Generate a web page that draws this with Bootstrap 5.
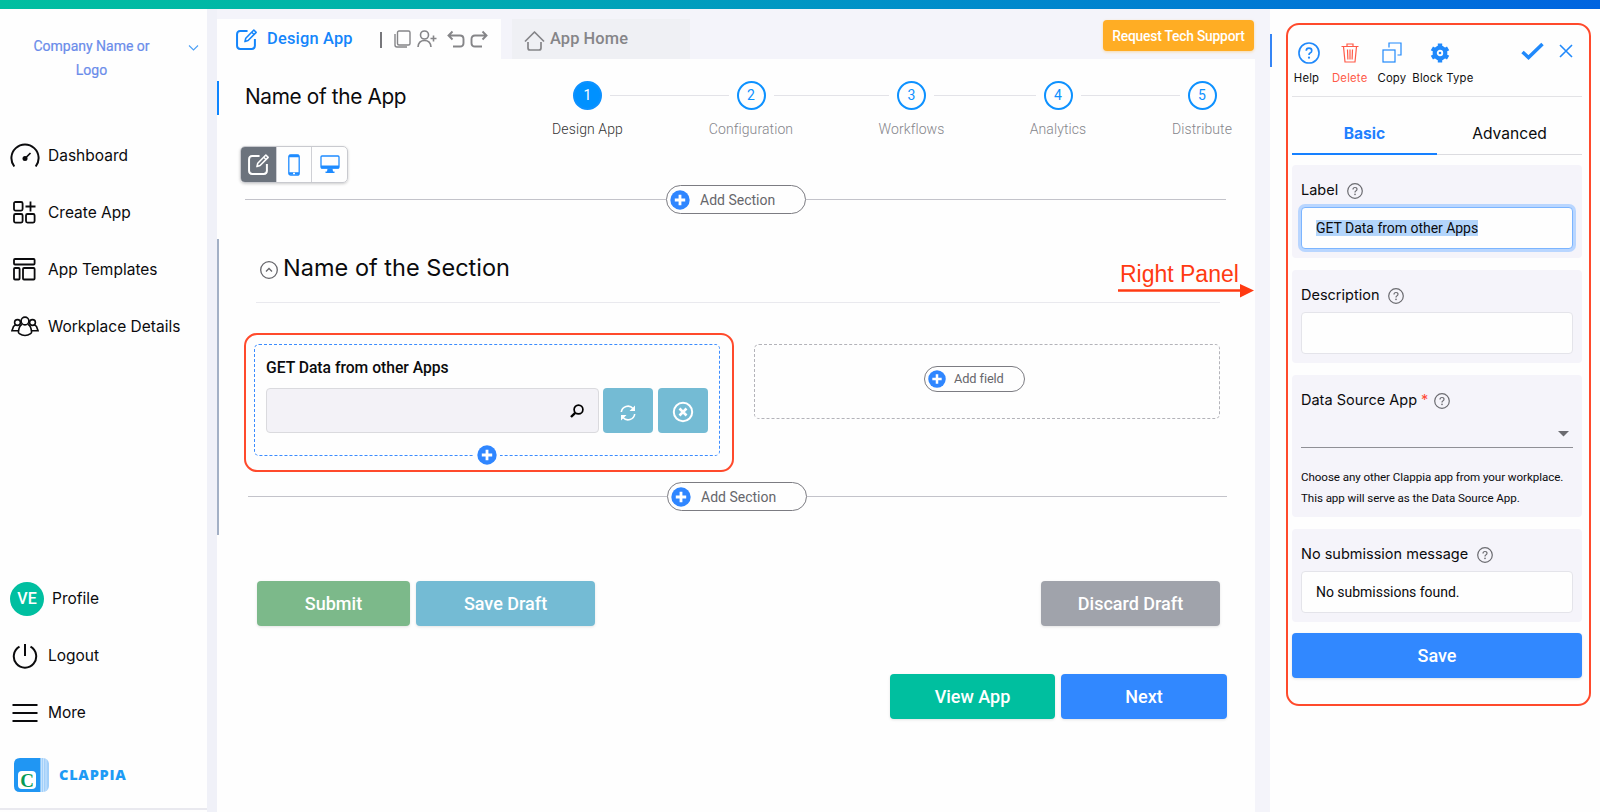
<!DOCTYPE html>
<html lang="en">
<head>
<meta charset="utf-8">
<meta name="viewport" content="width=device-width, initial-scale=1">
<title>Clappia - Design App</title>
<link href="https://cdn.jsdelivr.net/npm/bootstrap@5.3.0/dist/css/bootstrap.min.css" rel="stylesheet">
<style>
body{font-family:Roboto,"Liberation Sans",sans-serif;color:#0b0b0d;background:#f4f4fa;height:812px;overflow:hidden;line-height:20px}
svg{display:block;flex:none;fill:none;stroke:currentColor}
.topbar{height:9px;background:linear-gradient(90deg,#00bfa0 0%,#00b5a8 20%,#0091c8 55%,#0078d4 80%,#0064e0 100%)}
.shell{height:803px}
.side{width:207px;background:#fefefe}
.gutter{width:10px;background:#f0f1f8}
.company{height:118px;padding-top:26px;font-size:14px;line-height:23.5px;color:#6a8cea;-webkit-text-stroke:.2px #6a8cea}
.company .label{width:183px}
.company svg{position:absolute;left:188px;top:35px;color:#4da0f5}
.side-item{height:57px;font-family:Inter,Roboto,sans-serif;font-size:15.5px}
.side-item .ico{width:48px;display:flex;justify-content:center;padding-left:1px}
.avatar{width:34px;height:34px;margin-left:10px;margin-right:8px;background:#00bfa0;color:#fff;font-family:Roboto,sans-serif;font-size:16px;font-weight:500}
.brand-row{height:67px;padding-left:14px}
.brand-row svg{stroke:none}
.brand{font:800 14.5px/20px "Open Sans",sans-serif;color:#1d9bf5;letter-spacing:.75px;margin-left:10px}
.side-end{height:4px;border-top:2px solid #e9e9ef}
.stage{width:1038px}
.tabs-row{height:50px;padding-top:10px}
.tab-on{width:284px;background:#fefefe;padding-left:19px;color:#858588}
.tab-on .name{color:#1485fb;font-size:16.4px;font-weight:500;letter-spacing:.2px;width:86px;margin-left:10px;margin-right:27px;white-space:nowrap}
.vbar{width:2px;height:16px;background:#77777b;margin-top:2px}
.tab-off{width:178px;margin-left:11px;padding-left:12px;background:#eff0f4;color:#858588;font-size:16.4px;font-weight:500;letter-spacing:.1px}
.support{width:151px;height:31px;margin:1px 1px 0 0;background:#ffad24;color:#fff;border-radius:4px;font-size:13.8px;font-weight:500;letter-spacing:-.2px;box-shadow:0 1px 3px #ffad2460}
.canvas{background:#fefefe;height:753px}
.title-row{height:75px;padding-top:22px}
.title-row .bar{width:2px;height:34px;background:#0d85ff}
.title-row .name{width:328px;margin-left:26px;font-family:Inter,Roboto,sans-serif;font-size:20.800px;letter-spacing:-.35px;line-height:31px}
.steps{display:grid;grid-template-columns:29px 134.5px 29px 131.5px 29px 117.5px 29px 115px 29px}
.step{display:flex;flex-direction:column;align-items:center;white-space:nowrap;font-size:14px;font-weight:300;color:#85858b;letter-spacing:.1px}
.step b{width:29px;height:29px;border:2px solid #0d91ff;border-radius:50%;color:#0d91ff;font-weight:400;line-height:25px;text-align:center;font-size:14px;margin-bottom:9px;margin-top:-.5px;letter-spacing:0}
.step.on b{background:#0091ff;color:#fff}.step.on{color:#333}
.link-line{height:1px;background:#e3e3e8;margin:14px 8px 0}
.devices{width:108px;height:37px;margin:12px 0 0 23px;border:1px solid #c9cacf;border-radius:5px;box-shadow:0 1px 3px #0003;overflow:hidden;color:#1e8bff}
.devices div{flex:1;display:flex;align-items:center;justify-content:center;border-left:1px solid #cfd0d5}
.devices div:first-child{background:#6c737d;color:#fff;border:0}
.adder{height:29px;color:#66666b;font-size:14px}
.adder i{height:1px;background:#c3c3ca;flex:none}
.pill{width:140px;height:29px;border:1px solid #7c7c82;border-radius:15px;padding-left:3px}
.pill-sm{width:101px;height:26px;padding-left:3px;font-size:12.8px;letter-spacing:-.1px}
.pill span{margin-left:10px}
.pill-sm span{margin-left:8px}
.section{height:296px;border-left:2px solid #a3b0c5;margin-top:25px}
.section-head{height:64px;margin:0 35px 0 37px;padding:0 0 6px 4px;border-bottom:1px solid #e9e9ee;font-family:Inter,Roboto,sans-serif;font-size:23.500px;letter-spacing:.02px}
.section-head svg{color:#66666b;margin-top:4px}
.section-head span{margin-left:5px}
.fields{margin:41px 35px 0 35px;height:112px}
.picked{width:466px;height:112px;border:1.5px dashed #3b8cff;border-radius:5px;padding:13px 11px 0 11px}
.picked h6{font-size:15.7px;font-weight:500;line-height:20px;margin:0 0 10px;letter-spacing:-.02px}
.lookup{width:333px;height:45px;background:#f3f2f7;border:1px solid #dadade;border-radius:4px;padding-right:14px}
.sq{width:50px;height:45px;background:#74bbd4;color:#fff;border-radius:4px}
.plus-mid{left:219px;top:98px;width:26px;height:20px;background:#fefefe}
.slot{width:466px;height:75px;border:1.5px dashed #b3b3b9;border-radius:5px;padding:21px 0 0 169px}
.act{height:45px;border-radius:4px;color:#fff;font-size:18px;font-weight:500;display:flex;align-items:center;justify-content:center;box-shadow:0 1px 3px #0000001c}
.divide{width:15px}
.panel{width:330px;background:#fefefe}
.panel-bar{left:0;top:25px;width:2px;height:33px;background:#3585f5}
.outline-red{border:2px solid #ff4a2c;border-radius:13px}
.panel-box{width:305px;height:683px;margin:14px 0 0 16px;padding:0 7px 0 4px}
.tools{height:72px;border-bottom:1px solid #e3e3e6;padding-top:16px;font-family:Inter,Roboto,sans-serif;font-size:11.3px;line-height:14px;letter-spacing:.2px;color:#111}
.tools .tool{display:flex;flex-direction:column;align-items:center;white-space:nowrap}
.tools .pic{height:23px;display:flex;align-items:center;margin-bottom:7px;color:#2089fb}
.ptabs{height:58px;font-family:Inter,Roboto,sans-serif;font-size:15.600px;width:291px}
.ptabs div{width:145px;display:flex;align-items:end;justify-content:center;padding-bottom:10px;border-bottom:1px solid #dcdce0}
.ptabs div:first-child{border-bottom:2px solid #1680ff;color:#1f80ff;font-weight:700;padding-bottom:9px}
.block{background:#f5f4fa;border-radius:4px;padding:15px 9px 0 9px;height:93px}
.block .cap{font-family:Inter,Roboto,sans-serif;font-size:14.5px;line-height:19.500px;height:27px;display:flex;white-space:nowrap}
.block .cap svg{margin:3px 0 0 9px;color:#6b6b70}
.box{height:42px;background:#fefefe;border:1px solid #e4e4ea;border-radius:4px;font-size:14px;line-height:40px;padding-left:14px;letter-spacing:-.03px}
.box.focus{border-color:#7cb5ff;box-shadow:0 0 0 3px #b9d6ff}
.box em{font-style:normal;background:#b3d5fb}
.pick{height:28px;border-bottom:1px solid #8f8f95;padding-right:4px}
.hint{font-size:11.600px;line-height:21px;letter-spacing:-.07px;margin-top:19px;white-space:nowrap}
.note{left:1118px;top:261px;color:#ff3a12;font:23px/26px "Liberation Sans",sans-serif}
</style>
</head>
<body>
<svg width="0" height="0" class="position-absolute">
  <symbol id="plus" viewBox="0 0 20 20"><circle cx="10" cy="10" r="9.7" fill="#2f86ff" stroke="none"/><path d="M10 4.8v10.4M4.8 10h10.4" stroke="#fff" stroke-width="2.8"/></symbol>
  <symbol id="edit" viewBox="0 0 20 20"><path d="M11 2H4Q1 2 1 5v11q0 3 3 3h11q3 0 3-3V9.500" stroke-width="1.9"/><path d="M8.500 12l.8-3.200L17 1l2.200 2.200-7.700 7.800z" stroke-width="1.500" stroke-linejoin="round"/><path d="M15 3l2.200 2.200" stroke-width="1.300"/></symbol>
  <symbol id="ask" viewBox="0 0 16 16"><circle cx="8" cy="8" r="7.300" stroke-width="1.200"/><path d="M6 6.400Q6 4.500 8 4.500t2 1.800Q10 7.500 8.800 8 8 8.400 8 9.500" stroke-width="1.200"/><circle cx="8" cy="11.400" r=".8" fill="currentColor" stroke="none"/></symbol>
</svg>
<div class="topbar"></div>
<div class="shell d-flex position-relative">
  <aside class="side d-flex flex-column">
    <div class="company position-relative text-center"><div class="label">Company Name or<br>Logo</div>
      <svg width="11" height="8" viewBox="0 0 11 8"><path d="M1 1.500l4.500 4.500L10 1.500" stroke-width="1.100"/></svg></div>
    <div class="side-item d-flex align-items-center"><div class="ico"><svg width="30" height="25" viewBox="0 0 30 25"><path d="M4.300 23.500A13.600 13.600 0 1 1 25.700 23.500" stroke-width="2"/><circle cx="15" cy="15.500" r="2.500" fill="currentColor" stroke="none"/><path d="M15 15.500l5.500-5.500" stroke-width="1.700"/></svg></div>Dashboard</div>
    <div class="side-item d-flex align-items-center"><div class="ico"><svg width="23" height="24" viewBox="0 0 23 24" stroke-width="1.800"><rect x="1" y="1" width="8.600" height="8.600" rx="1.500"/><rect x="1" y="13" width="8.600" height="8.600" rx="1.500"/><rect x="13" y="13" width="8.600" height="8.600" rx="1.500"/><path d="M17.500 .5v10M12.500 5.500h10"/></svg></div>Create App</div>
    <div class="side-item d-flex align-items-center"><div class="ico"><svg width="23" height="24" viewBox="0 0 23 24" stroke-width="1.800"><rect x="1" y="1" width="20.600" height="5.500" rx="1"/><rect x="1" y="10" width="5.600" height="11.500" rx="1"/><rect x="10" y="10" width="11.600" height="11.500" rx="1"/></svg></div>App Templates</div>
    <div class="side-item d-flex align-items-center"><div class="ico"><svg width="28" height="21" viewBox="0 0 28 21" stroke-width="1.600"><circle cx="14" cy="5" r="3.900"/><path d="M11 8.500C8.500 9.500 7.700 12.500 7.400 16q0 1 1 1.600Q11 19.500 14 19.500t5.600-1.900q1-.6 1-1.600c-.3-3.500-1.100-6.500-3.600-7.500"/><circle cx="6.500" cy="6.500" r="2.900"/><circle cx="21.500" cy="6.500" r="2.900"/><path d="M4.500 8.800L2.500 10.500 1 14.700h6M23.500 8.800l2 1.700L27 14.700h-6"/></svg></div>Workplace Details</div>
    <div class="mt-auto">
      <div class="side-item d-flex align-items-center"><div class="avatar rounded-circle d-flex align-items-center justify-content-center">VE</div>Profile</div>
      <div class="side-item d-flex align-items-center"><div class="ico"><svg width="26" height="26" viewBox="0 0 26 26" stroke-width="2"><path d="M7.500 3.700A11.200 11.200 0 1 0 18.500 3.700M13 1v12"/></svg></div>Logout</div>
      <div class="side-item d-flex align-items-center"><div class="ico"><svg width="26" height="20" viewBox="0 0 26 20" stroke-width="2"><path d="M.5 2h25M.5 10h25M.5 18h25"/></svg></div>More</div>
      <div class="brand-row d-flex align-items-center"><svg width="35" height="34" viewBox="0 0 35 34"><rect x="15" width="20" height="34" rx="6" fill="#a3d0fa"/><path d="M29.500 0v34M32 1v32" stroke="#d5eafd" stroke-width=".8"/><path d="M6 0h20.500v34H6q-6 0-6-6V6q0-6 6-6z" fill="#2096f3"/><path d="M27.200 0v34" stroke="#d5eafd" stroke-width="1"/><rect x="4" y="13" width="18" height="18" rx="4" fill="#fff"/><text x="13" y="28.500" text-anchor="middle" font-family="Liberation Serif,serif" font-weight="700" font-size="19" fill="#069b57">C</text></svg><span class="brand">CLAPPIA</span></div>
      <div class="side-end"></div>
    </div>
  </aside>
  <div class="gutter"></div>
  <main class="stage">
    <div class="tabs-row d-flex">
      <div class="tab-on d-flex align-items-center">
        <svg width="21" height="21" style="color:#1485fb"><use href="#edit"/></svg><span class="name">Design App</span><span class="vbar"></span>
        <svg width="17" height="18" viewBox="0 0 17 18" stroke-width="1.400" style="margin-left:12px"><rect x="3.500" y="1" width="12.500" height="14" rx="1.500"/><path d="M1 4v11q0 2 2 2h10"/></svg>
        <svg width="20" height="18" viewBox="0 0 20 18" stroke-width="1.600" style="margin-left:6px"><circle cx="7.500" cy="5" r="4"/><path d="M1 17q.5-6.500 6.500-6.500T14 17M13.500 8.500h6M16.500 5.500v6"/></svg>
        <svg width="18" height="18" viewBox="0 0 18 18" stroke-width="1.900" style="margin-left:10px"><path d="M5.500 1.500L1.500 5.500l4 4M1.500 5.500H13q3.500 0 3.500 3.500v4q0 3.500-3.500 3.500H6"/></svg>
        <svg width="18" height="18" viewBox="0 0 18 18" stroke-width="1.900" style="margin-left:5px"><path d="M12.500 1.500l4 4-4 4M16.500 5.500H5Q1.500 5.500 1.500 9v4q0 3.500 3.500 3.500h7"/></svg>
      </div>
      <div class="tab-off d-flex align-items-center"><svg width="21" height="20" viewBox="0 0 21 20" stroke-width="1.700" stroke-linejoin="round" style="margin-top:3px"><path d="M1 10.500L10.500 1 20 10.500M4 11v6q0 2 2 2h9q2 0 2-2v-6"/></svg><span style="margin-left:5px">App Home</span></div>
      <div class="support ms-auto d-flex align-items-center justify-content-center">Request Tech Support</div>
    </div>
    <div class="canvas">
      <div class="title-row d-flex">
        <div class="bar"></div><div class="name">Name of the App</div>
        <div class="steps">
          <div class="step on"><b>1</b>Design App</div><div class="link-line"></div>
          <div class="step"><b>2</b>Configuration</div><div class="link-line"></div>
          <div class="step"><b>3</b>Workflows</div><div class="link-line"></div>
          <div class="step"><b>4</b>Analytics</div><div class="link-line"></div>
          <div class="step"><b>5</b>Distribute</div>
        </div>
      </div>
      <div class="devices d-flex">
        <div><svg width="21" height="21"><use href="#edit"/></svg></div>
        <div><svg width="12" height="22" viewBox="0 0 12 22"><rect x=".8" y=".8" width="10.400" height="20.400" rx="2" stroke-width="1.300"/><path d="M1 2h10M1 19.500h10" stroke-width="2.600"/><path d="M5 19.500h2" stroke="#fff" stroke-width="1.500"/></svg></div>
        <div><svg width="20" height="19" viewBox="0 0 20 19"><rect x="1" y="1" width="18" height="12" rx="1" stroke-width="1.300"/><path d="M1 12h18" stroke-width="3"/><path d="M7.500 13.500h5l.5 3h1.500V18h-9v-1.500H7z" fill="currentColor" stroke="none"/></svg></div>
      </div>
      <div class="adder d-flex align-items-center" style="margin:2px 0 0 28px"><i style="width:421px"></i><div class="pill d-flex align-items-center"><svg width="20" height="20"><use href="#plus"/></svg><span>Add Section</span></div><i style="width:420px"></i></div>
      <div class="section">
        <div class="section-head d-flex align-items-center"><svg width="18" height="18" viewBox="0 0 18 18"><circle cx="9" cy="9" r="8.300" stroke-width="1.300"/><path d="M6 10.500l3-3 3 3" stroke-width="1.300"/></svg><span>Name of the Section</span></div>
        <div class="fields d-flex justify-content-between">
          <div class="picked position-relative">
            <h6>GET Data from other Apps</h6>
            <div class="d-flex">
              <div class="lookup d-flex align-items-center justify-content-end"><svg width="14" height="14" viewBox="0 0 14 14" style="color:#000"><circle cx="8.500" cy="5.500" r="4.400" stroke-width="1.700"/><path d="M5.200 8.800L1 13" stroke-width="2.400"/></svg></div>
              <div class="sq d-flex align-items-center justify-content-center" style="margin-left:4px"><svg width="16" height="16" viewBox="0 0 16 16" stroke-width="1.600" class="mt-1"><path d="M1.300 7A6.700 6.700 0 0 1 13 3.500M14.700 9A6.700 6.700 0 0 1 3 12.500"/><path d="M15 .5V6H9.500zM1 15.500V10h5.500z" fill="currentColor" stroke="none"/></svg></div>
              <div class="sq d-flex align-items-center justify-content-center" style="margin-left:5px"><svg width="22" height="22" viewBox="0 0 22 22" style="margin-top:3px"><circle cx="11" cy="11" r="9.200" stroke-width="2"/><path d="M7.500 7.500l7 7M14.500 7.500l-7 7" stroke-width="2.600"/></svg></div>
            </div>
            <div class="plus-mid position-absolute d-flex justify-content-center"><svg width="20" height="20" style="margin-top:2px"><use href="#plus"/></svg></div>
          </div>
          <div class="slot"><div class="adder pill pill-sm d-flex align-items-center"><svg width="18" height="18"><use href="#plus"/></svg><span>Add field</span></div></div>
        </div>
        <div class="adder d-flex align-items-center" style="margin:26px 0 0 29px"><i style="width:419px"></i><div class="pill d-flex align-items-center"><svg width="20" height="20"><use href="#plus"/></svg><span>Add Section</span></div><i style="width:420px"></i></div>
      </div>
      <div class="d-flex" style="margin:46px 35px 0 40px">
        <div class="act" style="width:153px;background:#7cb98a">Submit</div>
        <div class="act" style="width:179px;background:#74bbd4;margin-left:6px">Save Draft</div>
        <div class="act ms-auto" style="width:179px;background:#a0a3ab">Discard Draft</div>
      </div>
      <div class="d-flex justify-content-end" style="margin:48px 28px 0 0">
        <div class="act" style="width:165px;background:#00bf9f">View App</div>
        <div class="act" style="width:166px;background:#3188ff;margin-left:6px">Next</div>
      </div>
    </div>
  </main>
  <div class="divide"></div>
  <aside class="panel position-relative">
    <div class="panel-bar position-absolute"></div>
    <div class="panel-box outline-red">
      <div class="tools d-flex">
        <div class="tool" style="margin-left:1px"><div class="pic"><svg width="22" height="22" style="margin-left:5px"><use href="#ask"/></svg></div>Help</div>
        <div class="tool" style="color:#ff5a48;margin-left:12px"><div class="pic" style="color:#ff5a48"><svg width="18" height="20" viewBox="0 0 18 20" stroke-width="1.200"><path d="M.5 3.500h17M6 3.500V1h6v2.500M2.500 3.500L4 19h10l1.500-15.500M6.500 6.500l.4 10M9 6.500v10M11.500 6.500l-.4 10"/></svg></div>Delete</div>
        <div class="tool" style="margin-left:10px"><div class="pic"><svg width="20" height="21" viewBox="0 0 20 21" stroke-width="1.200"><rect x="1" y="8" width="12" height="12"/><path d="M7 5.500V1h12v12h-3.500"/></svg></div>Copy</div>
        <div class="tool" style="margin-left:6px"><div class="pic"><svg width="20" height="20" viewBox="0 0 20 20" style="margin-right:6px"><circle cx="10" cy="10" r="5.300" stroke-width="4.200"/><path d="M10 .6v3M10 16.400v3M1.900 5.300l2.600 1.500M15.500 13.200l2.600 1.500M1.900 14.700l2.600-1.500M15.500 6.800l2.600-1.500" stroke-width="4.400"/><circle cx="10" cy="10" r="1.300" fill="currentColor" stroke="none"/></svg></div>Block Type</div>
        <div class="pic ms-auto" style="margin-top:-2px"><svg width="23" height="18" viewBox="0 0 23 18"><path d="M1.500 10l6 5.500L21.500 2" stroke-width="3.500"/></svg></div>
        <div class="pic" style="margin:-2px 9px 0 15px"><svg width="14" height="14" viewBox="0 0 14 14"><path d="M1 1l12 12M13 1L1 13" stroke-width="1.600"/></svg></div>
      </div>
      <div class="ptabs d-flex"><div>Basic</div><div>Advanced</div></div>
      <div class="block" style="margin-top:10px"><div class="cap">Label<svg width="16" height="16"><use href="#ask"/></svg></div><div class="box focus"><em>GET Data from other Apps</em></div></div>
      <div class="block" style="margin-top:12px"><div class="cap">Description<svg width="16" height="16"><use href="#ask"/></svg></div><div class="box"></div></div>
      <div class="block" style="height:142px;margin-top:12px"><div class="cap">Data Source App<span class="ms-1" style="color:#ff4a38">*</span><svg width="16" height="16" style="margin-left:6px"><use href="#ask"/></svg></div>
        <div class="pick d-flex align-items-center justify-content-end" style="margin-top:3px"><svg width="11" height="6" viewBox="0 0 11 6" style="color:#6b6b70"><path d="M0 0h11L5.500 5.500z" fill="currentColor" stroke="none"/></svg></div>
        <div class="hint">Choose any other Clappia app from your workplace.<br>This app will serve as the Data Source App.</div></div>
      <div class="block" style="margin-top:12px"><div class="cap">No submission message<svg width="16" height="16"><use href="#ask"/></svg></div><div class="box">No submissions found.</div></div>
      <div class="act" style="background:#3188ff;margin-top:11px">Save</div>
    </div>
  </aside>
  <div class="outline-red position-absolute" style="left:244px;top:324px;width:490px;height:139px"></div>
</div>
<div class="note position-absolute">&hairsp;Right Panel<svg width="136" height="14" viewBox="0 0 136 14" style="margin-top:-3px"><path d="M0 6.500h125" stroke-width="2.500"/><path d="M122 0l14 6.500-14 7z" fill="currentColor" stroke="none"/></svg></div>
<script src="https://cdn.jsdelivr.net/npm/bootstrap@5.3.0/dist/js/bootstrap.bundle.min.js"></script>
</body>
</html>
